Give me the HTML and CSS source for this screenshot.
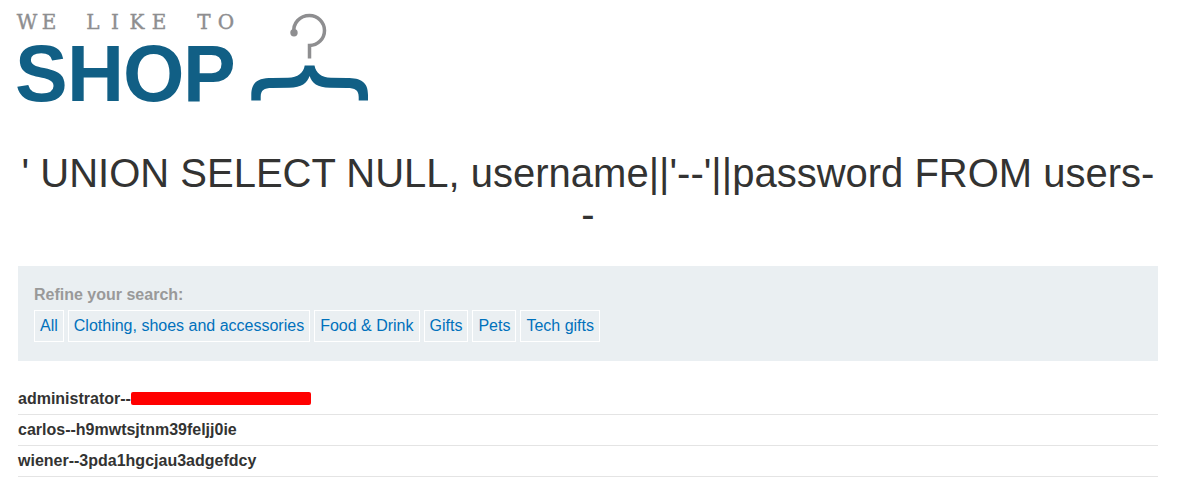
FILE: index.html
```html
<!DOCTYPE html>
<html lang="en">
<head>
<meta charset="utf-8">
<meta name="viewport" content="width=device-width, initial-scale=1">
<title>We like to shop</title>
<link rel="stylesheet" href="styles.css">
</head>
<body>
<main class="page">
  <header class="brand">
    <svg class="logo" width="356" height="112" viewBox="13 10 356 112" role="img" aria-label="We like to shop">
      <text class="logo-tagline" x="27 49 71 93 115 137 159 181 204 226" y="29">WE LIKE TO</text>
      <text class="logo-name" x="15 67 123 183" y="101">SHOP</text>
      <path d="M294 33C292.500 23 300 15.500 309.500 15.500A15 15 0 0 1 309.500 45.500V58.500" fill="none" stroke="#8e8e90" stroke-width="3.500"/>
      <circle cx="294" cy="32.700" r="3.700" fill="#8e8e90"/>
      <path d="M304.700 65.500H314.500C316 73 321 77.500 331 77.700L347 78C361 78 368 82 368 95V100.500H358.700V97C358.700 90 355 88 347 88L330 87.800C317 87.500 312 83 309.600 76C307 83 302 87.500 289 87.800L272 88C264 88 260.700 90 260.700 97V100.500H251.300V95C251.300 82 258 78 272 78L288 77.700C298 77.500 303.500 73 304.700 65.500Z" fill="#115f85"/>
    </svg>
  </header>
  <h1 class="title">' UNION SELECT NULL, username||'--'||password FROM users--</h1>
  <nav class="filters" aria-labelledby="filters-label">
    <span class="filters-label" id="filters-label">Refine your search:</span>
    <div class="filters-list">
      <a class="filter" href="#">All</a>
      <a class="filter" href="#">Clothing, shoes and accessories</a>
      <a class="filter" href="#">Food &amp; Drink</a>
      <a class="filter" href="#">Gifts</a>
      <a class="filter" href="#">Pets</a>
      <a class="filter" href="#">Tech gifts</a>
    </div>
  </nav>
  <table class="results">
    <tbody>
      <tr><th scope="row">administrator--<span class="redacted"></span></th></tr>
      <tr><th scope="row">carlos--h9mwtsjtnm39feljj0ie</th></tr>
      <tr><th scope="row">wiener--3pda1hgcjau3adgefdcy</th></tr>
    </tbody>
  </table>
</main>
</body>
</html>
```
FILE: styles.css
```css
* {
  box-sizing: border-box;
}

body {
  margin: 0;
  background: #fff;
  color: #333332;
  font: 16px/22px "Liberation Sans", Arial, sans-serif;
}

.page {
  padding: 10px 36px 10px 18px;
}

.logo {
  display: block;
  margin-left: -5px;
  overflow: visible;
}

.logo-tagline {
  fill: #8e8e90;
  stroke: #8e8e90;
  stroke-width: 0.4;
  font: 20px "DejaVu Serif", serif;
  text-anchor: middle;
}

.logo-name {
  fill: #115f85;
  font: bold 79px "Liberation Sans", Arial, sans-serif;
}

.title {
  margin: 31px 0 31px;
  font-size: 40px;
  font-weight: 400;
  line-height: 41px;
  text-align: center;
}

.filters {
  padding: 18px 16px 19px;
  background: #eaeff2;
}

.filters-label {
  display: block;
  color: #999;
  font-weight: 700;
}

.filters-list {
  display: flex;
  flex-wrap: wrap;
  gap: 4px;
  margin-top: 4px;
}

.filter {
  padding: 4px 5px;
  border: 1px solid #fff;
  color: #0071bc;
  text-decoration: none;
}

.results {
  width: 100%;
  margin-top: 23px;
  border-collapse: collapse;
}

.results th {
  padding: 4px 0;
  border-bottom: 1px solid #e4e4e4;
  text-align: left;
}

.redacted {
  display: inline-block;
  width: 180px;
  height: 13px;
  border-radius: 2px;
  background: #f00;
  vertical-align: -1px;
}
```
